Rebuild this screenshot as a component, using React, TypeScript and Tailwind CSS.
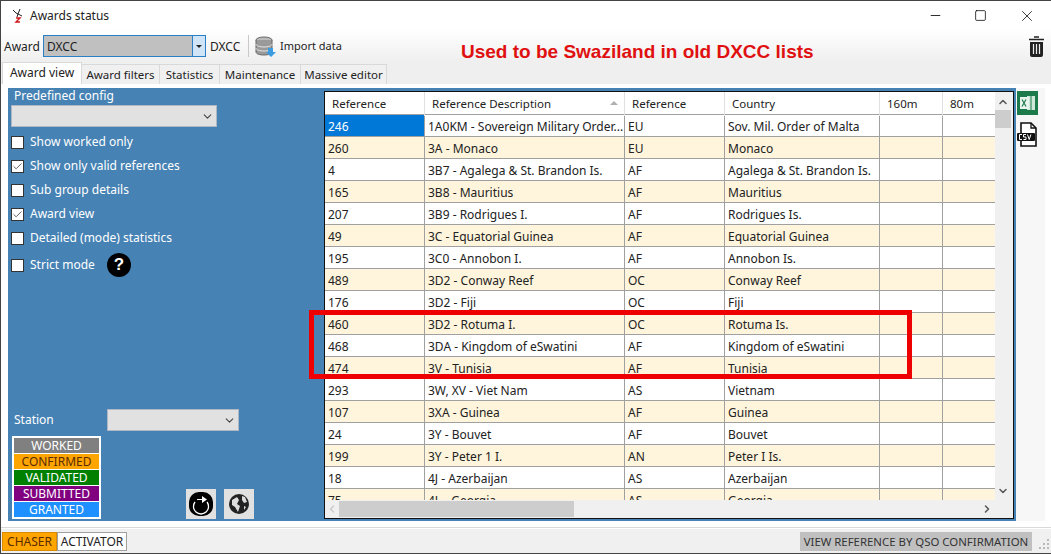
import { Check, ChevronDown, ChevronUp, ChevronLeft, ChevronRight, Minus, Square, X } from 'lucide-react';

const rows = [
  ['246', '1A0KM - Sovereign Military Order...', 'EU', 'Sov. Mil. Order of Malta'],
  ['260', '3A - Monaco', 'EU', 'Monaco'],
  ['4', '3B7 - Agalega & St. Brandon Is.', 'AF', 'Agalega & St. Brandon Is.'],
  ['165', '3B8 - Mauritius', 'AF', 'Mauritius'],
  ['207', '3B9 - Rodrigues I.', 'AF', 'Rodrigues Is.'],
  ['49', '3C - Equatorial Guinea', 'AF', 'Equatorial Guinea'],
  ['195', '3C0 - Annobon I.', 'AF', 'Annobon Is.'],
  ['489', '3D2 - Conway Reef', 'OC', 'Conway Reef'],
  ['176', '3D2 - Fiji', 'OC', 'Fiji'],
  ['460', '3D2 - Rotuma I.', 'OC', 'Rotuma Is.'],
  ['468', '3DA - Kingdom of eSwatini', 'AF', 'Kingdom of eSwatini'],
  ['474', '3V - Tunisia', 'AF', 'Tunisia'],
  ['293', '3W, XV - Viet Nam', 'AS', 'Vietnam'],
  ['107', '3XA - Guinea', 'AF', 'Guinea'],
  ['24', '3Y - Bouvet', 'AF', 'Bouvet'],
  ['199', '3Y - Peter 1 I.', 'AN', 'Peter I Is.'],
  ['18', '4J - Azerbaijan', 'AS', 'Azerbaijan'],
  ['75', '4L - Georgia', 'AS', 'Georgia'],
];

const options = [
  { label: 'Show worked only', on: false },
  { label: 'Show only valid references', on: true },
  { label: 'Sub group details', on: false },
  { label: 'Award view', on: true },
  { label: 'Detailed (mode) statistics', on: false },
];

const tabs = ['Award filters', 'Statistics', 'Maintenance', 'Massive editor'];
const tabWidths = ['w-[78px]', 'w-[60px]', 'w-[81px]', 'w-[86px]'];

function Box({ on }: { on: boolean }) {
  return (
    <span className="w-[13px] h-[13px] bg-white border border-[#333] flex items-center justify-center shrink-0">
      {on && <Check size={11} strokeWidth={2} className="text-[#555]" />}
    </span>
  );
}

function Select({ w }: { w: string }) {
  return (
    <div className={`${w} h-[22px] bg-[#e1e1e1] border border-[#adb8c4] flex items-center justify-end pr-[2px]`}>
      <ChevronDown size={13} className="text-[#444]" />
    </div>
  );
}

function Legend({ label, cls }: { label: string; cls: string }) {
  return <div className={`h-[15px] leading-[15px] text-center ${cls}`}>{label}</div>;
}

export default function App() {
  return (
    <div className="relative w-[1051px] h-[554px] overflow-hidden bg-white flex flex-col border-t border-l border-b border-[#444] text-[12px] text-[#222] font-['Noto_Sans',sans-serif]">
      {/* title bar */}
      <div className="h-[29px] flex items-center shrink-0 bg-white">
        <svg width="14" height="16" viewBox="0 0 14 16" className="ml-[10px]">
          <path d="M2 2l3 3M9 1L7 6 5 5M7 6l4 2M7 6l-1 3" stroke="#222" strokeWidth="1" fill="none" />
          <path d="M5 10h4l-4 4h4" stroke="#d01818" strokeWidth="1.4" fill="none" />
        </svg>
        <span className="ml-[5px] mt-[1px]">Awards status</span>
        <div className="ml-auto flex items-center mr-[2px] text-black">
          <div className="w-[45px] flex justify-center pr-[2px]"><Minus size={15} strokeWidth={1.3} /></div>
          <div className="w-[45px] flex justify-center pr-[2px]"><Square size={13} strokeWidth={1.4} /></div>
          <div className="w-[45px] flex justify-center"><X size={18} strokeWidth={1} /></div>
        </div>
      </div>

      {/* toolbar */}
      <div className="h-[32px] shrink-0 flex items-center bg-gradient-to-b from-white to-[#efefef] pl-[3px]">
        <span className="w-[39px] mt-[1px]">Award</span>
        <div className="w-[163px] h-[22px] border border-[#2b7fc7] bg-[#c0c0c0] flex items-center">
          <span className="pl-[3px] flex-1 mt-[1px]">DXCC</span>
          <span className="w-[13px] h-full bg-[#cfe5f7] border-l border-[#2b7fc7] flex items-center justify-center">
            <span className="w-0 h-0 border-x-[3px] border-x-transparent border-t-[3px] border-t-[#222]" />
          </span>
        </div>
        <span className="ml-[4px] w-[34px] mt-[1px]">DXCC</span>
        <span className="ml-[4px] w-px h-[22px] bg-[#c8c8c8]" />
        <svg width="21" height="23" viewBox="0 0 21 23" className="ml-[6px]">
          <ellipse cx="9" cy="5" rx="8" ry="3" fill="#bbb" stroke="#666" />
          <path d="M1 5v12c0 2 4 3 8 3s8-1 8-3V5" fill="#9a9a9a" stroke="#666" />
          <path d="M1 9c0 2 4 3 8 3s8-1 8-3M1 13c0 2 4 3 8 3s8-1 8-3" fill="none" stroke="#e8e8e8" />
          <path d="M13 13h5v4h3l-5 5-5-5h2z" fill="#3d9be0" />
        </svg>
        <span className="ml-[4px] mt-[1px] text-[11px]">Import data</span>
        <div className="ml-auto mr-[7px]">
          <svg width="15" height="21" viewBox="0 0 15 21">
            <path d="M5 1h5M0 3.5h15" stroke="#222" strokeWidth="1.5" />
            <path d="M1 6h13v13q0 2-2 2H3q-2 0-2-2z" fill="#222" />
            <path d="M4.5 8v10M7.5 8v10M10.5 8v10" stroke="#eee" strokeWidth="1.2" />
          </svg>
        </div>
      </div>

      {/* tabs */}
      <div className="h-[22px] shrink-0 flex items-end bg-[#efefef] pl-[1px] whitespace-nowrap">
        <div className="w-[80px] h-[22px] bg-white border-t border-x border-[#d9d9d9] text-center leading-[20px]">Award view</div>
        {tabs.map((t, i) => (
          <div key={t} className={`${tabWidths[i]} h-[20px] bg-[#f0f0f0] border-t border-r border-[#d9d9d9] text-center leading-[20px] text-[11.5px]`}>{t}</div>
        ))}
      </div>

      {/* main panel */}
      <div className="flex-1 min-h-0 bg-white flex pl-[7px] pt-[4px] pb-[6px] border-b border-[#d9d9d9]">
        <div className="w-[1008px] bg-[#4682b4] flex">
          {/* left options */}
          <div className="w-[316px] shrink-0 flex flex-col text-white px-[3px] pb-[2px]">
            <div className="pl-[3px] leading-[14px] mt-[1px]">Predefined config</div>
            <div className="mt-[2px]"><Select w="w-[206px]" /></div>
            <div className="mt-[8px] flex flex-col gap-[10px]">
              {options.map(o => (
                <label key={o.label} className="h-[14px] flex items-center gap-[6px]">
                  <Box on={o.on} />
                  <span>{o.label}</span>
                </label>
              ))}
              <label className="h-[24px] flex items-center gap-[6px] -mt-[2px]">
                <Box on={false} />
                <span className="w-[71px]">Strict mode</span>
                <span className="w-[24px] h-[24px] rounded-full bg-black text-white flex items-center justify-center font-bold text-[17px] font-['Liberation_Sans',sans-serif]">?</span>
              </label>
            </div>
            <div className="mt-auto flex items-center pl-[3px] mb-[5px]">
              <span className="w-[93px]">Station</span>
              <Select w="w-[132px]" />
            </div>
            <div className="flex items-end pl-[1px]">
              <div className="w-[89px] h-[83px] bg-white p-[2px] flex flex-col gap-[1px]">
                <Legend label="WORKED" cls="bg-[#808080] text-white" />
                <Legend label="CONFIRMED" cls="bg-[#ffa500] text-[#5a2a00]" />
                <Legend label="VALIDATED" cls="bg-[#008000] text-white" />
                <Legend label="SUBMITTED" cls="bg-[#800080] text-white" />
                <Legend label="GRANTED" cls="bg-[#1e90ff] text-white" />
              </div>
              <div className="ml-[85px] w-[30px] h-[30px] bg-[#e1e1e1] flex items-center justify-center">
                <svg width="26" height="26" viewBox="0 0 26 26">
                  <rect x="1" y="1" width="24" height="24" rx="10" fill="#000" />
                  <path d="M7 11a7.5 7.5 0 1 0 12 0" fill="none" stroke="#fff" strokeWidth="1.3" />
                  <path d="M9 8h5V5l5 3.5-5 3.5V9H9z" fill="#fff" />
                </svg>
              </div>
              <div className="ml-[8px] w-[30px] h-[30px] bg-[#e1e1e1] flex items-center justify-center">
                <svg width="24" height="24" viewBox="0 0 24 24">
                  <circle cx="12" cy="12" r="10" fill="#222" />
                  <path d="M5 8l5-3 2 3-2 4 3 2-2 6-3-5-3-2zM15 4l3 1 2 5-3 1-2-3zM17 14l2 1-2 3z" fill="#ddd" />
                </svg>
              </div>
            </div>
          </div>

          {/* grid */}
          <div className="flex-1 min-w-0 mt-[3px] mb-[2px] mr-[2px] bg-[#f0f0f0] border border-[#111] flex flex-col overflow-hidden">
            <div className="flex-1 min-h-0 flex">
              <div className="flex-1 min-w-0 flex flex-col overflow-hidden">
                <div className="h-[23px] shrink-0 bg-white grid grid-cols-[100px_200px_100px_155px_63px_52px] border-b border-[#a0a0a0] leading-[24px] text-[11.5px]">
                  {['Reference', 'Reference Description', 'Reference', 'Country', '160m', '80m'].map((h, i) => (
                    <div key={i} className="relative pl-[7px] border-r border-[#e0e0e0] last:border-r-0">
                      {h}
                      {i === 1 && <span className="absolute right-[6px] top-[9px] w-0 h-0 border-x-[4px] border-x-transparent border-b-[4px] border-b-[#b0b0b0]" />}
                    </div>
                  ))}
                </div>
                {rows.map((r, i) => (
                  <div key={r[0]} className={`h-[22px] shrink-0 grid grid-cols-[100px_200px_100px_155px_63px_52px] border-b border-[#a0a0a0] leading-[23px] ${i % 2 ? 'bg-[#fff5dc]' : 'bg-white'}`}>
                    {r.map((c, j) => (
                      <div key={j} className={`pl-[3px] border-r border-[#a0a0a0] whitespace-nowrap overflow-hidden ${i === 0 && j === 0 ? 'bg-[#0078d7] text-white' : ''}`}>{c}</div>
                    ))}
                    <div className="border-r border-[#a0a0a0]" />
                    <div />
                  </div>
                ))}
              </div>
              {/* vertical scrollbar */}
              <div className="w-[18px] shrink-0 pr-[2px] bg-[#f0f0f0] flex flex-col items-center">
                <ChevronUp size={12} strokeWidth={3} className="text-[#555] mt-[4px]" />
                <div className="w-full h-[18px] bg-[#cdcdcd] mt-[2px]" />
                <ChevronDown size={12} strokeWidth={3} className="text-[#555] mt-auto mb-[3px]" />
              </div>
            </div>
            {/* horizontal scrollbar */}
            <div className="h-[18px] shrink-0 bg-[#f0f0f0] flex items-center pr-[20px]">
              <ChevronLeft size={12} strokeWidth={3} className="text-[#ccc] ml-[1px]" />
              <div className="w-[235px] h-[16px] bg-[#cdcdcd] ml-px" />
              <ChevronRight size={12} strokeWidth={3} className="text-[#555] ml-auto" />
            </div>
          </div>
        </div>

        {/* export icons */}
        <div className="w-[29px] bg-[#f7f7f7] flex flex-col pl-[1px] pt-[3px] gap-[7px]">
          <svg width="21" height="24" viewBox="0 0 21 24">
            <rect width="21" height="24" fill="#1d7a4a" />
            <rect x="10" y="5" width="8" height="14" fill="#cfe8da" />
            <rect x="3" y="6" width="9" height="12" fill="#e8f4ee" />
            <path d="M5 8.5l4 7M9 8.5l-4 7" stroke="#1d7a4a" strokeWidth="1.2" />
            <path d="M14 5v14" stroke="#1d7a4a" />
          </svg>
          <svg width="21" height="25" viewBox="0 0 21 25">
            <path d="M4 1h10l5 5v18H4z" fill="#fff" stroke="#111" strokeWidth="1.6" />
            <path d="M14 1v5h5" fill="none" stroke="#111" strokeWidth="1.3" />
            <rect x="0" y="11" width="18" height="8" rx="1" fill="#111" />
            <path d="M5 12.5H2.5v5H5M9 12.5H6.5v2.5H9v2.5H6.5M10.5 12.5l1.7 5 1.7-5" fill="none" stroke="#fff" strokeWidth="1" />
          </svg>
        </div>
      </div>

      {/* status bar */}
      <div className="h-[25px] shrink-0 bg-[#f0f0f0] flex items-center pl-[1px] border-t border-[#fff] whitespace-nowrap">
        <div className="w-[55px] h-[19px] bg-[#ffa500] border border-[#d98c00] text-[#5a2a00] text-center leading-[17px]">CHASER</div>
        <div className="w-[70px] h-[19px] bg-white border border-[#a0a0a0] text-center leading-[17px]">ACTIVATOR</div>
        <div className="ml-auto w-[232px] h-[19px] bg-[#c0c0c0] text-center leading-[19px] text-[#333] text-[11.4px]">VIEW REFERENCE BY QSO CONFIRMATION</div>
        <svg width="12" height="12" viewBox="0 0 12 12" className="ml-[6px] mr-[1px] mt-[6px]">
          <path d="M9 1h2v2H9zM5 5h2v2H5zM9 5h2v2H9zM1 9h2v2H1zM5 9h2v2H5zM9 9h2v2H9z" fill="#b8b8b8" />
        </svg>
      </div>

      {/* annotations drawn on top of the screenshot */}
      <div className="absolute left-[460px] top-[40px] text-[19px] leading-[22px] font-bold text-[#e01010] font-['Liberation_Sans',sans-serif] whitespace-nowrap">Used to be Swaziland in old DXCC lists</div>
      <div className="absolute left-[308px] top-[309px] w-[603px] h-[69px] border-[5px] border-[#ee0000]" />
    </div>
  );
}
